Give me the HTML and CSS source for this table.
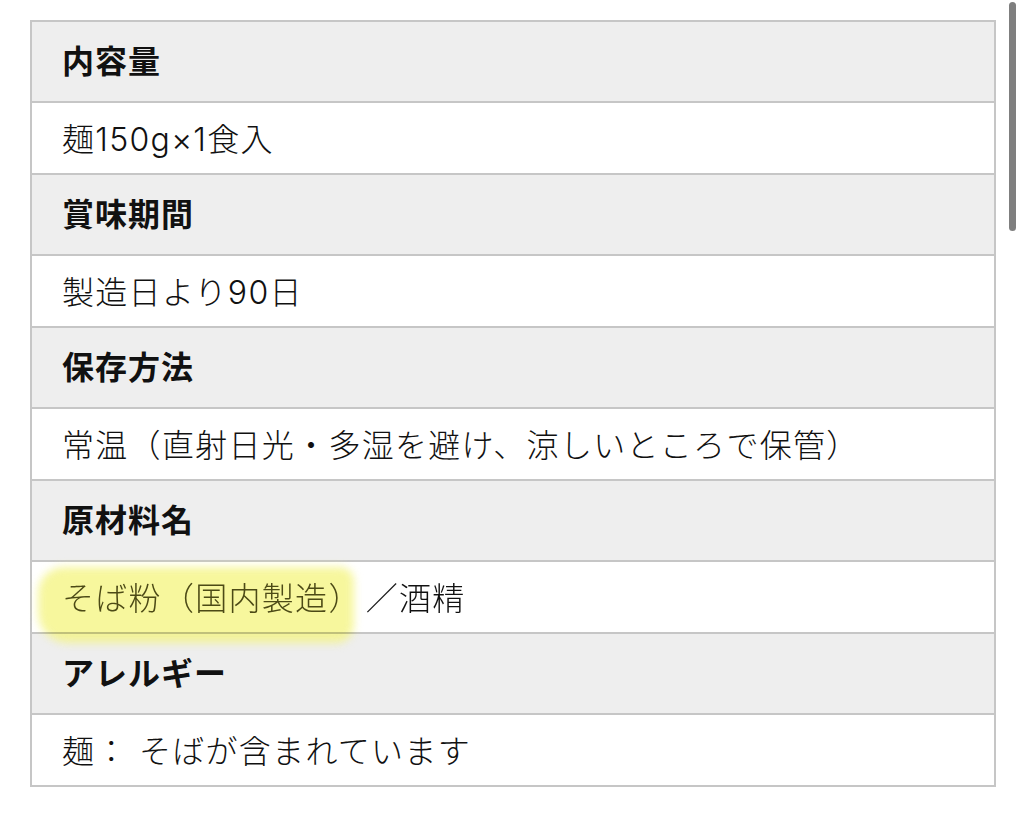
FILE: index.html
```html
<!DOCTYPE html>
<html lang="ja">
<head>
<meta charset="utf-8">
<link rel="stylesheet" href="styles.css">
</head>
<body>
<div class="table">
  <div class="row head">内容量</div>
  <div class="row data">麺150g×1食入</div>
  <div class="row head">賞味期間</div>
  <div class="row data">製造日より90日</div>
  <div class="row head">保存方法</div>
  <div class="row data">常温（直射日光・多湿を避け、涼しいところで保管）</div>
  <div class="row head">原材料名</div>
  <div class="row data marked"><span class="mark"></span><span class="hl">そば粉（国内製造）</span>／酒精</div>
  <div class="row head">アレルギー</div>
  <div class="row data last">麺：&nbsp;そばが含まれています</div>
</div>
<div class="scrollbar"></div>
</body>
</html>
```

FILE: styles.css
```css
html, body {
  margin: 0;
  padding: 0;
  background: #ffffff;
}
body {
  padding: 20px 28px 0 30px;
  font-family: "Inter", "Noto Sans CJK JP", "Noto Sans", sans-serif;
  color: #111111;
}
.table {
  border: 2px solid #c6c6c6;
  display: flex;
  flex-direction: column;
}
.row {
  display: flex;
  align-items: center;
  padding-left: 30px;
  font-size: 32px;
  letter-spacing: 1.3px;
  line-height: 1;
  border-bottom: 2px solid #c6c6c6;
  position: relative;
}
.row.last { border-bottom: none; }
.head {
  height: 79px;
  background: #eeeeee;
  font-weight: 700;
  letter-spacing: 1px;
}
.data {
  height: 67px;
  padding-top: 3px;
  background: #ffffff;
  font-weight: 300;
}
.marked { z-index: 2; }
.mark {
  position: absolute;
  left: 6px;
  top: 5px;
  width: 316px;
  height: 76px;
  background: #f4f47c;
  border-radius: 26px 14px 18px 30px;
  filter: blur(4px);
  opacity: 0.75;
  mix-blend-mode: multiply;
}
.hl {
  position: relative;
  color: #4c4a16;
  margin-right: 4px;
}
.scrollbar {
  position: absolute;
  left: 1009px;
  top: 2px;
  width: 7px;
  height: 229px;
  border-radius: 4px;
  background: #7f7f7f;
}
```
